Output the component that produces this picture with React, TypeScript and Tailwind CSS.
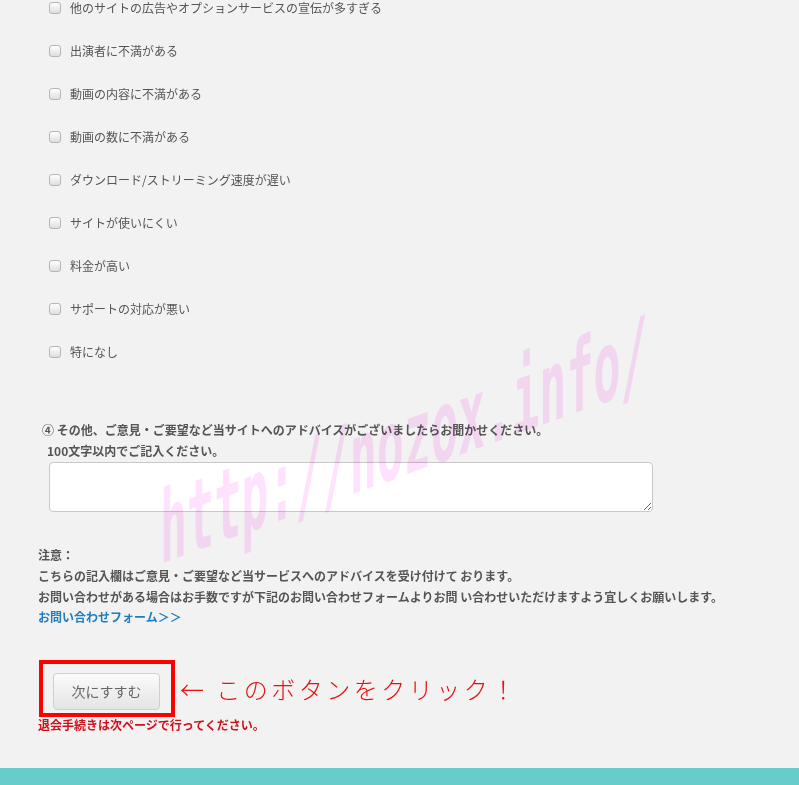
import React from "react";

const reasons = [
  "他のサイトの広告やオプションサービスの宣伝が多すぎる",
  "出演者に不満がある",
  "動画の内容に不満がある",
  "動画の数に不満がある",
  "ダウンロード/ストリーミング速度が遅い",
  "サイトが使いにくい",
  "料金が高い",
  "サポートの対応が悪い",
  "特になし",
];

const jp = { fontFamily: '"Noto Sans CJK JP", "Noto Sans", sans-serif' };

function Box() {
  return (
    <span className="block h-[12px] w-[12px] shrink-0 rounded-[3px] border border-[#b5b5b5] bg-gradient-to-b from-[#ffffff] to-[#dedede]" />
  );
}

export default function App() {
  return (
    <div className="relative min-h-[785px] overflow-hidden bg-[#f2f2f2] text-[#555]" style={jp}>
      <div className="-mt-[14px]">
        {reasons.map((r) => (
          <label key={r} className="flex h-[43px] items-center pl-[49px]">
            <Box />
            <span className="ml-[9px] text-[12px] leading-none">{r}</span>
          </label>
        ))}
      </div>

      <div className="mt-[46px] pl-[42px] text-[12px] font-bold leading-[21px]">
        ④ その他、ご意見・ご要望など当サイトへのアドバイスがございましたらお聞かせください。
      </div>
      <div className="pl-[47px] text-[12px] font-bold leading-[21px]">100文字以内でご記入ください。</div>
      <div className="pl-[49px] pt-[1px]">
        <textarea className="block h-[50px] w-[604px] rounded-[4px] border border-[#c8c8c8] bg-white" />
      </div>

      <div className="mt-[32px] pl-[38px] text-[12px] font-bold leading-[21px]">
        <div>注意：</div>
        <div>こちらの記入欄はご意見・ご要望など当サービスへのアドバイスを受け付けて おります。</div>
        <div>お問い合わせがある場合はお手数ですが下記のお問い合わせフォームよりお問 い合わせいただけますよう宜しくお願いします。</div>
        <a className="block leading-[20px] text-[#1f7dbf]">お問い合わせフォーム＞＞</a>
      </div>

      <div className="mt-[33px] flex items-center pl-[39px]">
        <div className="border-[4px] border-[#ff0000] pb-[3px] pl-[10px] pr-[11px] pt-[9px]">
          <button className="h-[37px] w-[107px] rounded-[4px] border border-[#cfcfcf] bg-gradient-to-b from-[#fbfbfb] to-[#e4e4e4] text-[14px] text-[#666]">
            次にすすむ
          </button>
        </div>
        <span className="ml-[5px] text-[24px] font-light tracking-[3.5px] text-[#e81010]">← このボタンをクリック！</span>
      </div>
      <div className="pl-[38px] text-[12px] font-bold leading-[16px] text-[#d0101a]">
        退会手続きは次ページで行ってください。
      </div>

      <div className="mt-[35px] h-[60px] bg-[#67cdcb]" />

      {/* site watermark */}
      <div
        className="pointer-events-none absolute left-[160px] top-[480px] whitespace-nowrap text-[100px] font-bold leading-none text-[#ffe2fd] mix-blend-multiply [transform-origin:0_85px] [transform:skewY(-20deg)_scaleX(0.45)]"
        style={{ fontFamily: '"DejaVu Sans Mono", monospace' }}
      >
        http://nozox.info/
      </div>
    </div>
  );
}
